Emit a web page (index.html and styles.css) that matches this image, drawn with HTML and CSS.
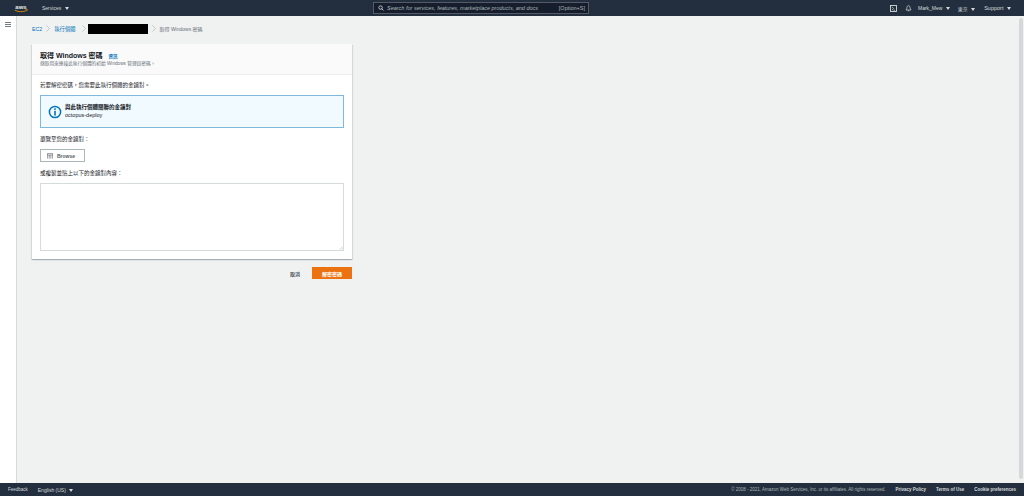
FILE: index.html
```html
<!DOCTYPE html>
<html lang="zh-Hant">
<head>
<meta charset="utf-8">
<title>取得 Windows 密碼</title>
<link rel="stylesheet" href="styles.css">
</head>
<body>
<header class="topnav">
  <svg class="logo" viewBox="0 0 14 10" aria-label="aws">
    <text x="7" y="5.6" class="logo-text">aws</text>
    <path d="M.8 7c3.500 2.200 8.500 2.200 11.800.3" fill="none" stroke="#f90" stroke-width=".8"/>
    <path d="M11.600 6.600l1.700-.2-.5 1.600" fill="none" stroke="#f90" stroke-width=".6"/>
  </svg>
  <span class="nav-item services">Services <i class="caret"></i></span>
  <div class="search">
    <svg class="search-icon" viewBox="0 0 8 8"><circle cx="3.400" cy="3.400" r="2.300" fill="none" stroke="#d5dbdb" stroke-width="1.100"/><path d="M5 5l2.200 2.200" stroke="#d5dbdb" stroke-width="1.200"/></svg>
    <span class="search-text">Search for services, features, marketplace products, and docs</span>
    <span class="search-key">[Option+S]</span>
  </div>
  <div class="nav-right">
    <svg class="nav-icon" viewBox="0 0 7 7"><rect x=".5" y=".5" width="6" height="6" fill="none" stroke="#d5dbdb" stroke-width=".9"/><path d="M2 1.800l1.500 1.700L2 5.200M3.500 5.200h1.600" fill="none" stroke="#d5dbdb" stroke-width=".7"/></svg>
    <svg class="nav-icon bell" viewBox="0 0 7 7"><path d="M3.500.7C2.400.7 2 1.600 2 2.600 2 3.800 1.400 4.200 1 5h5c-.4-.8-1-1.200-1-2.400 0-1-.4-1.900-1.500-1.900z" fill="none" stroke="#d5dbdb" stroke-width=".7"/><path d="M2.800 5.800h1.400" stroke="#d5dbdb" stroke-width=".8"/></svg>
    <span class="nav-item user">Mark_Mew <i class="caret"></i></span>
    <span class="nav-item region">東京 <i class="caret"></i></span>
    <span class="nav-item support">Support <i class="caret"></i></span>
  </div>
</header>
<div class="body-row">
  <aside class="sidebar">
    <svg class="menu" viewBox="0 0 6 5"><path d="M0 .5h6M0 2.500h6M0 4.500h6" stroke="#545b64" stroke-width=".8"/></svg>
  </aside>
  <main class="main">
    <nav class="crumbs">
      <a class="crumb-link">EC2</a>
      <svg class="chev" viewBox="0 0 4 7"><path d="M.5.5l3 3-3 3" fill="none" stroke="#aab7b8" stroke-width=".7"/></svg>
      <a class="crumb-link">執行個體</a>
      <svg class="chev chev-tight" viewBox="0 0 4 7"><path d="M.5.5l3 3-3 3" fill="none" stroke="#aab7b8" stroke-width=".7"/></svg>
      <span class="redacted"></span>
      <svg class="chev" viewBox="0 0 4 7"><path d="M.5.5l3 3-3 3" fill="none" stroke="#aab7b8" stroke-width=".7"/></svg>
      <span class="crumb-current">取得 Windows 密碼</span>
    </nav>
    <section class="card">
      <div class="card-head">
        <div class="title-row"><h1 class="title">取得 Windows 密碼</h1><a class="info">資訊</a></div>
        <p class="subtitle">擷取用來連接此執行個體的初始 Windows 管理員密碼。</p>
      </div>
      <div class="card-body">
        <p class="label">若要解密密碼，您需要此執行個體的金鑰對。</p>
        <div class="alert">
          <svg class="alert-icon" viewBox="0 0 14 14"><circle cx="7" cy="7" r="5.600" fill="none" stroke="#0073bb" stroke-width="1.500"/><rect x="6.200" y="3.300" width="1.600" height="1.600" fill="#0073bb"/><rect x="6.200" y="5.800" width="1.600" height="4.800" fill="#0073bb"/></svg>
          <div class="alert-text">
            <div class="alert-title">與此執行個體關聯的金鑰對</div>
            <div class="alert-value">octopus-deploy</div>
          </div>
        </div>
        <p class="label browse-label">瀏覽至您的金鑰對：</p>
        <button class="browse"><svg class="browse-icon" viewBox="0 0 6 6"><path d="M.4.4h5.200v5.200M.4.4v5.200M.4 2h5.200M2.200 2v3.600M3.800 2v3.600" fill="none" stroke="#545b64" stroke-width=".6"/></svg>Browse</button>
        <p class="label paste-label">或複製並貼上以下的金鑰對內容：</p>
        <div class="keybox-wrap">
          <textarea class="keybox"></textarea>
          <svg class="grip" viewBox="0 0 4 4"><path d="M.5 3.700L3.700.5M2.200 3.700l1.500-1.500" stroke="#aab7b8" stroke-width=".5"/></svg>
        </div>
      </div>
    </section>
    <div class="actions">
      <button class="cancel">取消</button>
      <button class="primary">解密密碼</button>
    </div>
  </main>
  <div class="scrollbar"><span class="thumb"></span></div>
</div>
<footer class="footer">
  <span class="foot-link">Feedback</span>
  <span class="foot-lang">English (US) <i class="caret"></i></span>
  <span class="copyright">© 2008 - 2021, Amazon Web Services, Inc. or its affiliates. All rights reserved.</span>
  <span class="foot-strong">Privacy Policy</span>
  <span class="foot-strong">Terms of Use</span>
  <span class="foot-strong">Cookie preferences</span>
</footer>
</body>
</html>
```
FILE: styles.css
```css
* { box-sizing: border-box; }
html, body { margin: 0; height: 100%; overflow: hidden; }
body {
  display: flex;
  flex-direction: column;
  height: 496px;
  font-family: "Liberation Sans", "Noto Sans CJK TC", sans-serif;
  font-size: 5px;
  color: #16191f;
  background: #f0f1f1;
}
.topnav {
  flex: 0 0 16px;
  display: flex;
  align-items: center;
  background: #232f3e;
  color: #d5dbdb;
  position: relative;
}
.logo { width: 14px; height: 10px; margin-left: 14px; }
.logo-text { font: bold 6px "Liberation Sans", sans-serif; fill: #e8eaea; text-anchor: middle; }
.nav-item { white-space: nowrap; }
.caret {
  display: inline-block;
  width: 0; height: 0;
  margin-left: 2px;
  border-left: 2.5px solid transparent;
  border-right: 2.5px solid transparent;
  border-top: 3px solid #d5dbdb;
  vertical-align: 0;
}
.services { margin-left: 14px; }
.search {
  position: absolute;
  left: 373px;
  top: 2px;
  width: 216px;
  height: 12px;
  display: flex;
  align-items: center;
  background: #161e2d;
  border: 1px solid #545b64;
  color: #aab7b8;
}
.search-icon { width: 6px; height: 6px; margin-left: 4px; }
.search-text { margin-left: 3px; font-style: italic; flex: 1; white-space: nowrap; font-size: 5.500px; }
.search-key { margin-right: 3px; font-size: 5.500px; }
.nav-right { margin-left: auto; display: flex; align-items: center; }
.nav-icon { width: 7px; height: 7px; }
.bell { margin-left: 8px; }
.user { margin-left: 6px; }
.region { margin-left: 8px; }
.support { margin-left: 9px; margin-right: 13px; font-size: 5.500px; }
.body-row { flex: 1; display: flex; min-height: 0; }
.sidebar {
  flex: 0 0 17px;
  background: #fff;
  border-right: 1px solid #d5dbdb;
  padding: 6px 0 0 5px;
}
.menu { display: block; width: 6px; height: 5px; }
.main { flex: 1; padding: 0 0 0 15px; min-width: 0; }
.scrollbar { flex: 0 0 5px; padding-top: 2px; }
.thumb { display: block; width: 4px; height: 461px; background: #d5d8d8; border-radius: 2px; }
.crumbs { display: flex; align-items: center; height: 25px; margin-bottom: 3px; font-size: 5px; }
.crumb-link { color: #0073bb; font-size: 5.300px; }
.crumb-current { color: #687078; }
.chev { width: 4px; height: 7px; margin: 0 4px; }
.chev-tight { margin: 0 2px 0 6px; }
.redacted { width: 60px; height: 10px; background: #000; }
.card {
  width: 320px;
  height: 215px;
  background: #fff;
  box-shadow: 0 1px 1px rgba(0, 28, 36, .18), 1px 1px 1px rgba(0, 28, 36, .08), -1px 1px 1px rgba(0, 28, 36, .08);
}
.card-head {
  height: 31px;
  padding: 7px 8px 0;
  background: #fafafa;
  border-bottom: 1px solid #eaeded;
}
.title-row { display: flex; align-items: baseline; }
.title { margin: 0; font-size: 7px; line-height: 9px; font-weight: 700; }
.info { margin-left: 6px; color: #0073bb; font-size: 4.500px; font-weight: 700; }
.subtitle { margin: 1px 0 0; color: #687078; font-size: 4.700px; line-height: 6px; }
.card-body { padding: 7px 8px 0; }
.label { margin: 0; font-size: 5.500px; line-height: 7px; color: #16191f; }
.alert {
  display: flex;
  align-items: center;
  height: 33px;
  margin-top: 6px;
  padding-left: 7px;
  background: #f1faff;
  border: 1px solid #7fb9dc;
  font-size: 5.500px;
}
.alert-icon { width: 14px; height: 14px; }
.alert-text { margin-left: 3px; line-height: 7px; }
.alert-title { font-weight: 700; }
.alert-value { color: #16191f; margin-top: 1px; }
.browse-label { margin-top: 8px; }
.browse {
  display: flex;
  align-items: center;
  width: 45px;
  height: 13px;
  margin-top: 6px;
  padding: 0 0 0 6px;
  background: #fff;
  border: 1px solid #aab7b8;
  color: #545b64;
  font: 700 5px "Liberation Sans", sans-serif;
}
.browse-icon { width: 6px; height: 6px; margin-right: 4px; }
.paste-label { margin-top: 8px; }
.keybox-wrap { position: relative; margin-top: 6px; }
.keybox {
  display: block;
  width: 304px;
  height: 68px;
  background: #fff;
  border: 1px solid #d5dbdb;
  padding: 0;
  resize: none;
}
.grip { position: absolute; right: 1px; bottom: 1px; width: 4px; height: 4px; }
.actions {
  width: 320px;
  display: flex;
  justify-content: flex-end;
  align-items: center;
  margin-top: 8px;
}
.cancel {
  border: 0;
  background: none;
  color: #545b64;
  font: 700 5px "Liberation Sans", "Noto Sans CJK TC", sans-serif;
  padding: 0;
  margin-right: 12px;
}
.primary {
  width: 40px;
  height: 12px;
  border: 0;
  background: #ec7211;
  color: #fff;
  font: 700 5px "Liberation Sans", "Noto Sans CJK TC", sans-serif;
  padding: 0;
}
.footer {
  flex: 0 0 13px;
  display: flex;
  align-items: center;
  padding: 0 8px;
  background: #232f3e;
  color: #d5dbdb;
  font-size: 4.500px;
}
.foot-lang { margin-left: 10px; font-size: 5px; }
.copyright { margin-left: auto; color: #aab7b8; }
.foot-strong { margin-left: 10px; font-weight: 700; }
```
